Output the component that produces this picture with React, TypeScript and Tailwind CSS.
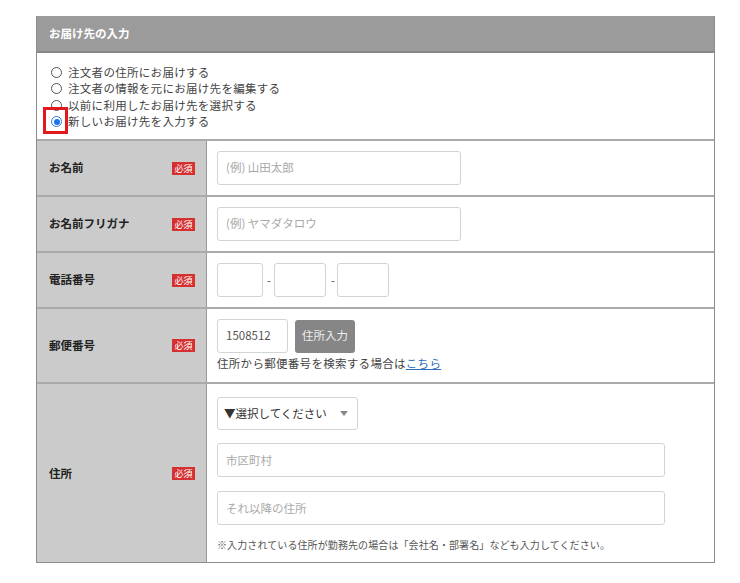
import React from "react";

const font = { fontFamily: '"Noto Sans CJK JP", "Noto Sans", sans-serif' };

function Badge() {
  return (
    <span className="inline-flex h-[13px] w-[23px] items-center justify-center bg-[#d5302f] text-[9px] leading-none text-white">
      必須
    </span>
  );
}

function Label({ children }: { children: React.ReactNode }) {
  return (
    <div className="flex w-[170px] shrink-0 items-center justify-between border-r border-[#999] bg-[#cbcbcb] pl-[12px] pr-[11px]">
      <span className="text-[11.5px] font-bold text-[#222]">{children}</span>
      <Badge />
    </div>
  );
}

function Input({ w, ph, value }: { w: string; ph?: string; value?: string }) {
  return (
    <div
      className={`flex h-[34px] items-center rounded-[3px] border border-[#d4d4d4] bg-white px-[8px] text-[11.5px] ${w} ${
        value ? "text-[#555]" : "text-[#a9a9a9]"
      }`}
    >
      {value ?? ph}
    </div>
  );
}

function Radio({ checked }: { checked?: boolean }) {
  return (
    <span
      className={`inline-flex h-[11px] w-[11px] items-center justify-center rounded-full border ${
        checked ? "border-[#2d7ad6]" : "border-[#555]"
      } bg-white`}
    >
      {checked && <span className="h-[6px] w-[6px] rounded-full bg-[#1a73e8]" />}
    </span>
  );
}

export default function App() {
  const opts = [
    "注文者の住所にお届けする",
    "注文者の情報を元にお届け先を編集する",
    "以前に利用したお届け先を選択する",
    "新しいお届け先を入力する",
  ];
  return (
    <div className="h-[583px] w-[740px] bg-white pl-[36px] pt-[16px]" style={font}>
      <div className="w-[679px] border-b border-l border-r border-[#8c8c8c]">
        <div className="flex h-[37px] items-center border-b-2 border-[#888] bg-[#9b9b9b] pl-[12px] text-[11.5px] font-bold text-white">
          お届け先の入力
        </div>
        <div className="flex h-[88px] flex-col justify-center border-b-2 border-[#aaa] pl-[14px] pt-[2px]">
          {opts.map((o, i) => (
            <div key={i} className="flex h-[16.5px] items-center gap-[6px] text-[11.5px] tracking-[0.3px] text-[#444]">
              {i === 3 ? (
                <span className="relative inline-flex">
                  <Radio checked />
                  <span className="absolute left-[-8px] top-[-9px] h-[27px] w-[25px] border-[3px] border-[#e0191e]" />
                </span>
              ) : (
                <Radio />
              )}
              <span>{o}</span>
            </div>
          ))}
        </div>

        <div className="flex border-b-2 border-[#aaa]">
          <Label>お名前</Label>
          <div className="flex-1 py-[10px] pl-[10px]">
            <Input w="w-[244px]" ph="(例) 山田太郎" />
          </div>
        </div>

        <div className="flex border-b-2 border-[#aaa]">
          <Label>お名前フリガナ</Label>
          <div className="flex-1 py-[10px] pl-[10px]">
            <Input w="w-[244px]" ph="(例) ヤマダタロウ" />
          </div>
        </div>

        <div className="flex border-b-2 border-[#aaa]">
          <Label>電話番号</Label>
          <div className="flex flex-1 items-center gap-[4px] py-[10px] pl-[10px] text-[11px] text-[#444]">
            <Input w="w-[46px]" />
            <span className="w-[3px]">-</span>
            <Input w="w-[52px]" />
            <span className="w-[3px] pl-[1px]">-</span>
            <Input w="w-[52px]" />
          </div>
        </div>

        <div className="flex border-b-2 border-[#aaa]">
          <Label>郵便番号</Label>
          <div className="flex-1 pb-[10px] pl-[10px] pt-[10px]">
            <div className="flex items-center gap-[7px]">
              <Input w="w-[71px]" value="1508512" />
              <div className="flex h-[33px] w-[60px] items-center justify-center rounded-[3px] bg-[#868686] text-[11.5px] text-[#eee]">
                住所入力
              </div>
            </div>
            <div className="mt-[2px] text-[11.5px] tracking-[0.3px] text-[#444]">
              住所から郵便番号を検索する場合は
              <span className="text-[#2a6fb8] underline">こちら</span>
            </div>
          </div>
        </div>

        <div className="flex">
          <Label>住所</Label>
          <div className="flex-1 pb-[10px] pl-[10px] pt-[13px]">
            <div className="flex h-[33px] w-[141px] items-center justify-between rounded-[3px] border border-[#d4d4d4] pl-[6px] pr-[9px] text-[11.5px] text-[#333]">
              <span>▼選択してください</span>
              <span className="h-0 w-0 border-l-[4px] border-r-[4px] border-t-[5px] border-l-transparent border-r-transparent border-t-[#888]" />
            </div>
            <div className="mt-[13px]">
              <Input w="w-[448px]" ph="市区町村" />
            </div>
            <div className="mt-[14px]">
              <Input w="w-[448px]" ph="それ以降の住所" />
            </div>
            <div className="mt-[12px] text-[10px] tracking-[0.1px] text-[#555]">
              ※入力されている住所が勤務先の場合は「会社名・部署名」なども入力してください。
            </div>
          </div>
        </div>
      </div>
    </div>
  );
}
